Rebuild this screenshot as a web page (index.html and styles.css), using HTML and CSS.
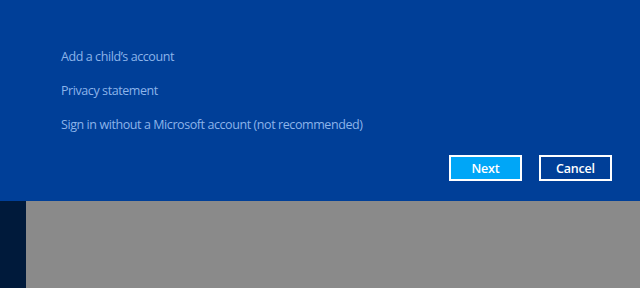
FILE: index.html
```html
<!DOCTYPE html>
<html>

<head>
    <meta name="viewport" content="width=device-width, initial-scale=1.0">
    <title>Add a user</title>
    <link rel="stylesheet" href="styles.css">
</head>

<body>
    <div id="dialog">
        <div class="links">
            <a class="link" href="#">Add a child’s account</a>
            <a class="link" href="#">Privacy statement</a>
            <a class="link" href="#">Sign in without a Microsoft account (not recommended)</a>
        </div>
        <div class="buttons">
            <button class="btn primary">Next</button>
            <button class="btn">Cancel</button>
        </div>
    </div>
    <div id="backdrop">
        <div class="side"></div>
        <div class="page"></div>
    </div>
</body>

</html>
```

FILE: styles.css
```css
body {
    margin: 0;
    font-family: "Open Sans", "Noto Sans", sans-serif;
    background: #8a8a8a;
    overflow: hidden;
    height: 288px;
    display: flex;
    flex-direction: column;
}

/* 对话框区域 */
#dialog {
    height: 201px;
    background: #003f98;
    box-sizing: border-box;
    padding: 47px 28px 0 61px;
}

.links {
    display: flex;
    flex-direction: column;
    gap: 14px;
}

.link {
    color: #8cb4ea;
    font-size: 12.5px;
    letter-spacing: -0.42px;
    line-height: 20px;
    text-decoration: none;
}

.buttons {
    display: flex;
    justify-content: flex-end;
    gap: 17px;
    margin-top: 20px;
}

.btn {
    width: 73px;
    height: 26px;
    border: 2px solid #ffffff;
    background: transparent;
    color: #ffffff;
    font-family: inherit;
    font-size: 12.5px;
    font-weight: 600;
    letter-spacing: -0.2px;
    padding: 0;
}

.btn.primary {
    background: #00a6f7;
}

/* 背景区域 */
#backdrop {
    flex: 1;
    display: flex;
}

.side {
    width: 26px;
    background: #001a3b;
}

.page {
    flex: 1;
    background: #8a8a8a;
}
```
